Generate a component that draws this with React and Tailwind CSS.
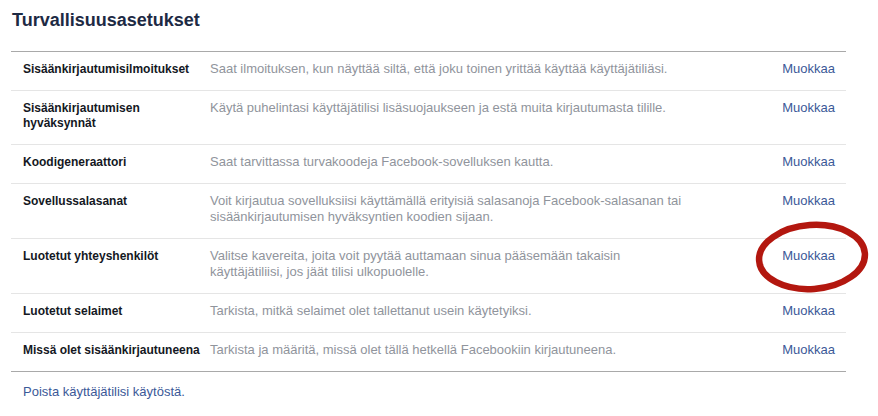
const rows = [
  {
    label: "Sisäänkirjautumisilmoitukset",
    text: "Saat ilmoituksen, kun näyttää siltä, että joku toinen yrittää käyttää käyttäjätiliäsi.",
  },
  {
    label: "Sisäänkirjautumisen hyväksynnät",
    text: "Käytä puhelintasi käyttäjätilisi lisäsuojaukseen ja estä muita kirjautumasta tilille.",
  },
  {
    label: "Koodigeneraattori",
    text: "Saat tarvittassa turvakoodeja Facebook-sovelluksen kautta.",
  },
  {
    label: "Sovellussalasanat",
    text: "Voit kirjautua sovelluksiisi käyttämällä erityisiä salasanoja Facebook-salasanan tai sisäänkirjautumisen hyväksyntien koodien sijaan.",
  },
  {
    label: "Luotetut yhteyshenkilöt",
    text: "Valitse kavereita, joita voit pyytää auttamaan sinua pääsemään takaisin käyttäjätiliisi, jos jäät tilisi ulkopuolelle.",
  },
  {
    label: "Luotetut selaimet",
    text: "Tarkista, mitkä selaimet olet tallettanut usein käytetyiksi.",
  },
  {
    label: "Missä olet sisäänkirjautuneena",
    text: "Tarkista ja määritä, missä olet tällä hetkellä Facebookiin kirjautuneena.",
  },
];

function SettingRow({ label, text }) {
  return (
    <li className="flex border-b border-[#e5e5e5] last:border-b-0 pt-[9px] pb-[13px] pl-[12px] pr-[11px]">
      <div className="w-[180px] mr-[7px] pt-[1px] text-[12px] leading-[15px] font-bold text-[#141823]">
        {label}
      </div>
      <div className="w-[480px] text-[13px] leading-[16px] text-[#90949c]">{text}</div>
      <div className="flex-1 text-right text-[13px] leading-[16px]">
        <a href="#" className="text-[#3b5998]">
          Muokkaa
        </a>
      </div>
    </li>
  );
}

export default function App() {
  return (
    <div className="relative w-[878px] h-[416px] bg-white font-['Liberation_Sans',Arial,sans-serif] overflow-hidden">
      <h2 className="pl-[12px] pt-[9px] text-[18px] leading-[22px] font-bold text-[#1d2a44]">
        Turvallisuusasetukset
      </h2>

      <ul className="ml-[11px] mt-[20px] w-[835px] border-t border-b border-[#a9a9a9]">
        {rows.map((row) => (
          <SettingRow key={row.label} label={row.label} text={row.text} />
        ))}
      </ul>

      <a href="#" className="block ml-[23px] mt-[12px] text-[13px] leading-[16px] text-[#3b5998]">
        Poista käyttäjätilisi käytöstä.
      </a>

      {/* red hand-drawn circle around one of the links */}
      <svg
        className="absolute left-[752px] top-[218px]"
        width="120"
        height="78"
        viewBox="0 0 120 78"
      >
        <ellipse
          cx="60"
          cy="39"
          rx="53"
          ry="32"
          fill="none"
          stroke="#b3170f"
          strokeWidth="6.5"
          transform="rotate(-4 60 39)"
        />
      </svg>
    </div>
  );
}
